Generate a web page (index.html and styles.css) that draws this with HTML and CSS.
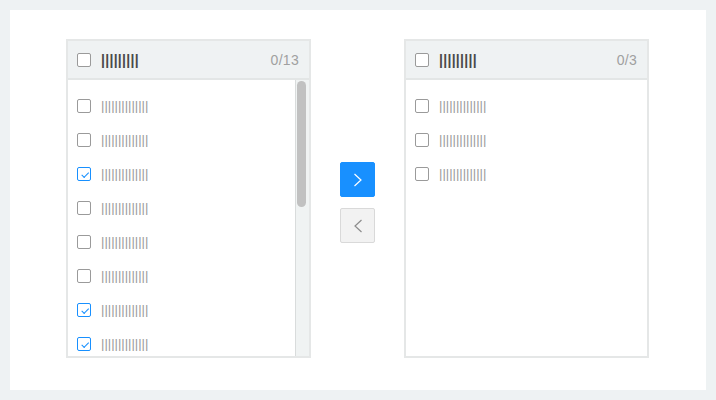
FILE: index.html
```html
<!DOCTYPE html>
<html>
<head>
<meta charset="utf-8">
<link rel="stylesheet" href="styles.css">
</head>
<body>
<div class="card">
  <div class="panel">
    <div class="panel-header">
      <span class="cb"></span>
      <span class="title">|||||||||</span>
      <span class="count">0/13</span>
    </div>
    <div class="panel-body">
      <ul class="list">
        <li class="item"><span class="cb"></span><span class="label">||||||||||||||</span></li>
        <li class="item"><span class="cb"></span><span class="label">||||||||||||||</span></li>
        <li class="item"><span class="cb checked"></span><span class="label">||||||||||||||</span></li>
        <li class="item"><span class="cb"></span><span class="label">||||||||||||||</span></li>
        <li class="item"><span class="cb"></span><span class="label">||||||||||||||</span></li>
        <li class="item"><span class="cb"></span><span class="label">||||||||||||||</span></li>
        <li class="item"><span class="cb checked"></span><span class="label">||||||||||||||</span></li>
        <li class="item"><span class="cb checked"></span><span class="label">||||||||||||||</span></li>
      </ul>
      <div class="scrollbar"><div class="thumb"></div></div>
    </div>
  </div>

  <div class="ops">
    <button class="op op-primary">
      <svg width="10" height="14" viewBox="0 0 10 14"><path d="M1.5 1 L8 7 L1.5 13" fill="none" stroke="#fff" stroke-width="1.2"/></svg>
    </button>
    <button class="op op-disabled">
      <svg width="10" height="14" viewBox="0 0 10 14"><path d="M8.5 1 L2 7 L8.5 13" fill="none" stroke="#8c8c8c" stroke-width="1.2"/></svg>
    </button>
  </div>

  <div class="panel">
    <div class="panel-header">
      <span class="cb"></span>
      <span class="title">|||||||||</span>
      <span class="count">0/3</span>
    </div>
    <div class="panel-body">
      <ul class="list">
        <li class="item"><span class="cb"></span><span class="label">||||||||||||||</span></li>
        <li class="item"><span class="cb"></span><span class="label">||||||||||||||</span></li>
        <li class="item"><span class="cb"></span><span class="label">||||||||||||||</span></li>
      </ul>
    </div>
  </div>
</div>
</body>
</html>
```

FILE: styles.css
```css
* { box-sizing: border-box; }
html, body { margin: 0; padding: 0; }
body {
  background: #eef2f3;
  font-family: "Liberation Sans", Arial, sans-serif;
  width: 716px;
  height: 400px;
  padding: 10px;
}
.card {
  background: #fff;
  width: 696px;
  height: 380px;
  display: flex;
  justify-content: flex-start;
  align-items: flex-start;
  padding: 29px 0 0 56px;
}
.panel {
  width: 245px;
  height: 319px;
  border: 2px solid #e5e7e7;
  display: flex;
  flex-direction: column;
  background: #fff;
}
.panel-header {
  height: 39px;
  flex: none;
  background: #eff2f3;
  border-bottom: 2px solid #e3e6e6;
  display: flex;
  align-items: center;
  padding: 0 10px 0 9px;
}
.title {
  font-weight: bold;
  font-size: 14px;
  color: #4a4a4a;
  letter-spacing: 0.3px;
  margin-left: 10px;
  line-height: 14px;
}
.count {
  margin-left: auto;
  font-size: 14px;
  color: #a0a0a0;
  letter-spacing: 0.3px;
}
.cb {
  width: 14px;
  height: 14px;
  flex: none;
  border: 1px solid #9a9a9a;
  border-radius: 2px;
  background: #fff;
  position: relative;
}
.cb.checked {
  border-color: #1890ff;
}
.cb.checked::after {
  content: "";
  position: absolute;
  left: 3px;
  top: 2px;
  width: 6px;
  height: 3px;
  border-left: 1px solid #1890ff;
  border-bottom: 1px solid #1890ff;
  transform: rotate(-45deg) translate(-1px, 2px);
}
.panel-body {
  flex: 1;
  display: flex;
  overflow: hidden;
}
.list {
  flex: 1;
  list-style: none;
  margin: 0;
  padding: 9px 0 0 9px;
}
.item {
  height: 34px;
  display: flex;
  align-items: center;
}
.label {
  margin-left: 10px;
  font-size: 13px;
  color: #9b9b9b;
  line-height: 14px;
}
.scrollbar {
  width: 14px;
  flex: none;
  background: #f0f3f3;
  border-left: 1px solid #d9dcdc;
  padding: 1px 2px 0 1px;
}
.thumb {
  width: 9px;
  height: 126px;
  border-radius: 5px;
  background: #c1c1c1;
}
.ops {
  width: 35px;
  margin: 123px 29px 0;
  display: flex;
  flex-direction: column;
  gap: 11px;
}
.op {
  width: 35px;
  height: 35px;
  border-radius: 2px;
  padding: 0;
  display: flex;
  align-items: center;
  justify-content: center;
}
.op-primary {
  background: #1890ff;
  border: 1px solid #1890ff;
}
.op-disabled {
  background: #f2f2f2;
  border: 1px solid #d9d9d9;
}
```
